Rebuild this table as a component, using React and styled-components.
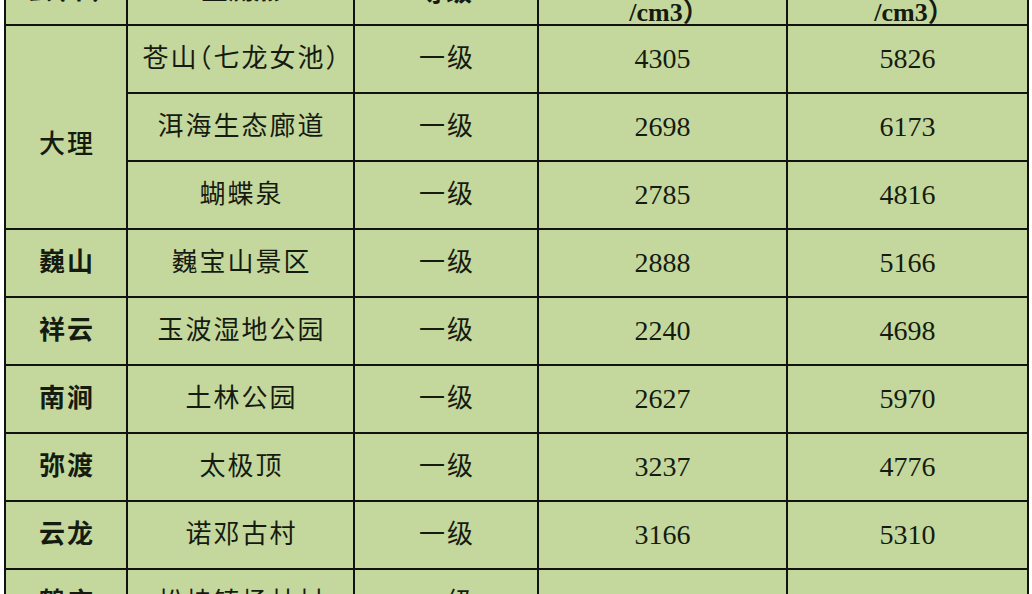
import React from 'react';
import styled, { createGlobalStyle } from 'styled-components';

const Global = createGlobalStyle`
  html, body { margin: 0; padding: 0; background: #ffffff; }
  body { font-family: "Liberation Serif", "Noto Sans CJK SC", serif; }
`;

const Page = styled.div`
  width: 1032px;
  height: 594px;
  overflow: hidden;
  background: #ffffff;
  padding-left: 4px;
  box-sizing: border-box;
`;

const Sheet = styled.table`
  border-collapse: collapse;
  table-layout: fixed;
  width: 1023px;
  margin-top: -48px;
  background: #c4d89e;
  color: #161b10;
`;

const HeadCell = styled.th`
  border: 2px solid #121212;
  height: 70px;
  padding: 0;
  text-align: center;
  vertical-align: bottom;
  font-size: 26px;
  font-weight: 700;
  font-feature-settings: "halt";
`;

const HeadLine = styled.div`
  line-height: ${p => (p.$tight ? 22 : 32)}px;
  margin-bottom: ${p => p.$lift || 0}px;
`;

const Cell = styled.td`
  border: 2px solid #121212;
  height: 66px;
  padding: 0 0 0 ${p => (p.$num ? 0 : 2)}px;
  padding-top: ${p => p.$drop || 0}px;
  text-align: center;
  vertical-align: middle;
  font-family: ${p => (p.$num ? '"Liberation Serif", serif' : '"Liberation Serif", "Noto Sans CJK SC", serif')};
  font-size: ${p => (p.$num ? 28 : 26)}px;
  letter-spacing: ${p => (p.$num ? 0 : 2)}px;
  font-weight: ${p => p.$weight || 400};
  font-feature-settings: "halt";
  line-height: 32px;
`;

const groups = [
  { county: '大理', weight: 500, drop: 36, sites: [
    ['苍山（七龙女池）', '一级', '4305', '5826'],
    ['洱海生态廊道', '一级', '2698', '6173'],
    ['蝴蝶泉', '一级', '2785', '4816'],
  ] },
  { county: '巍山', weight: 700, sites: [['巍宝山景区', '一级', '2888', '5166']] },
  { county: '祥云', weight: 700, sites: [['玉波湿地公园', '一级', '2240', '4698']] },
  { county: '南涧', weight: 700, sites: [['土林公园', '一级', '2627', '5970']] },
  { county: '弥渡', weight: 700, sites: [['太极顶', '一级', '3237', '4776']] },
  { county: '云龙', weight: 700, sites: [['诺邓古村', '一级', '3166', '5310']] },
  { county: '鹤庆', weight: 700, sites: [['松桂镇杨林村', '一级', '3012', '5204']] },
];

export default function App() {
  return (
    <>
      <Global />
      <Page>
        <Sheet>
          <colgroup>
            <col style={{ width: 122 }} />
            <col style={{ width: 227 }} />
            <col style={{ width: 184 }} />
            <col style={{ width: 249 }} />
            <col style={{ width: 241 }} />
          </colgroup>
          <thead>
            <tr>
              <HeadCell><HeadLine $lift={17}>县（市）</HeadLine></HeadCell>
              <HeadCell><HeadLine $lift={17}>监测点</HeadLine></HeadCell>
              <HeadCell><HeadLine $lift={15}>等级</HeadLine></HeadCell>
              <HeadCell>
                <HeadLine $tight $lift={14}>平均值（个</HeadLine>
                <HeadLine $tight>/cm3）</HeadLine>
              </HeadCell>
              <HeadCell>
                <HeadLine $tight $lift={14}>最高值（个</HeadLine>
                <HeadLine $tight>/cm3）</HeadLine>
              </HeadCell>
            </tr>
          </thead>
          <tbody>
            {groups.map(g =>
              g.sites.map((s, i) => (
                <tr key={g.county + i}>
                  {i === 0 && (
                    <Cell rowSpan={g.sites.length} $weight={g.weight} $drop={g.drop}>
                      {g.county}
                    </Cell>
                  )}
                  <Cell>{s[0]}</Cell>
                  <Cell>{s[1]}</Cell>
                  <Cell $num>{s[2]}</Cell>
                  <Cell $num>{s[3]}</Cell>
                </tr>
              ))
            )}
          </tbody>
        </Sheet>
      </Page>
    </>
  );
}
